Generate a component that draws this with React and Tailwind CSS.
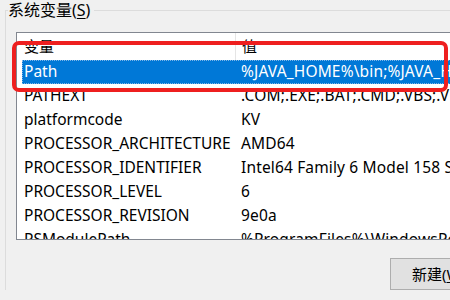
import React from "react";

const rows = [
  ["Path", "%JAVA_HOME%\\bin;%JAVA_HOME%\\jre\\bin;C:\\Windows"],
  ["PATHEXT", ".COM;.EXE;.BAT;.CMD;.VBS;.VBE;.JS;.JSE;.WSF"],
  ["platformcode", "KV"],
  ["PROCESSOR_ARCHITECTURE", "AMD64"],
  ["PROCESSOR_IDENTIFIER", "Intel64 Family 6 Model 158 Stepping 10, GenuineIntel"],
  ["PROCESSOR_LEVEL", "6"],
  ["PROCESSOR_REVISION", "9e0a"],
  ["PSModulePath", "%ProgramFiles%\\WindowsPowerShell\\Modules;C:\\Windows"],
];

const font = {
  fontFamily: '"Noto Sans", "Noto Sans CJK SC", sans-serif',
};

export default function App() {
  return (
    <div
      className="relative w-[450px] h-[300px] overflow-hidden bg-[#f0f0f0] text-black"
      style={font}
    >
      <fieldset className="ml-[5px] w-[480px] border-l border-t border-[#dcdcdc] pl-[2px]">
        <legend className="pr-[4px] text-[16px] leading-[20px]">
          系统变量(<span className="underline underline-offset-2">S</span>)
        </legend>
        <div className="mt-[12px] ml-[8px] h-[208px] w-[470px] overflow-hidden border border-[#828790] bg-white">
          <div className="ml-[5px] flex h-[27px] items-center text-[15px]">
            <div className="w-[213px] pl-[2px]">变量</div>
            <div className="h-full w-px bg-[#e5e5e5]" />
            <div className="pl-[6px]">值</div>
          </div>
          {rows.map(([name, value], i) => (
            <div
              key={name}
              className={
                i === 0
                  ? "ml-[5px] flex h-[24px] items-center whitespace-nowrap bg-[#0078d7] text-[15.5px] text-white outline outline-1 outline-dotted outline-[#7fb6e8] -outline-offset-1"
                  : "ml-[5px] flex h-[24px] items-center whitespace-nowrap text-[15.5px]"
              }
            >
              <div className="w-[214px] shrink-0 overflow-hidden pl-[2px]">{name}</div>
              <div className="pl-[5px] tracking-[0.15px]">{value}</div>
            </div>
          ))}
        </div>
        <div className="mt-[18px] ml-[382px] flex h-[32px] w-[80px] items-center border border-[#adadad] bg-[#e1e1e1] pl-[21px] text-[15px]">
          新建(<span className="underline underline-offset-2">W</span>)
        </div>
      </fieldset>
      <div className="pointer-events-none absolute left-[12px] top-[41px] h-[51px] w-[436px] rounded-[7px] border-[4px] border-[#ee1f1f]" />
    </div>
  );
}
